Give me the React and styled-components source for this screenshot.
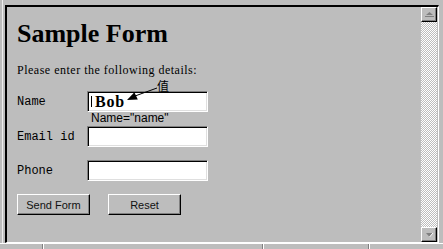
import styled, { createGlobalStyle } from 'styled-components'

const GlobalStyle = createGlobalStyle`
  html, body {
    margin: 0;
    padding: 0;
    background: #bdbdbd;
    overflow: hidden;
  }
`

const Window = styled.div`
  width: 443px;
  height: 249px;
  box-sizing: border-box;
  display: flex;
  flex-direction: column;
  background: #bdbdbd;
`
const Main = styled.div`
  flex: 1;
  display: flex;
  margin-left: 2px;
  border-left: 1px solid #ededed;
  padding: 5px 4px 0 2px;
  min-height: 0;
`
const Panel = styled.div`
  flex: 1;
  display: flex;
  border-style: solid;
  border-width: 2px 1px 1px 2px;
  border-color: #000 #fff #fff #000;
  padding-right: 1px;
  min-width: 0;
`
const Page = styled.div`
  flex: 1;
  padding: 14px 10px 0 10px;
  color: #000;
`
const Title = styled.h1`
  margin: 0;
  font-family: 'Liberation Serif', 'Times New Roman', serif;
  font-weight: bold;
  font-size: 26px;
  line-height: 26px;
`
const Intro = styled.p`
  margin: 16px 0 0;
  font-family: 'Liberation Serif', 'Times New Roman', serif;
  font-size: 12px;
  line-height: 14px;
  letter-spacing: 0.5px;
`
const Form = styled.form`
  margin-top: 14px;
  display: flex;
  flex-direction: column;
`
const Row = styled.div`
  position: relative;
  display: grid;
  grid-template-columns: 70px 121px;
  align-items: center;
  margin-top: ${(p) => p.$mt || 0}px;
`
const Label = styled.label`
  font-family: 'Liberation Mono', 'Courier New', monospace;
  font-size: 12px;
`
const Field = styled.div`
  box-sizing: border-box;
  width: 121px;
  height: 21px;
  background: #fff;
  border: 1px solid;
  border-color: #808080 #fff #fff #808080;
  box-shadow: inset 1px 1px #000, inset -1px -1px #dfdfdf;
  display: flex;
  align-items: center;
  padding-left: 3px;
`
const Caret = styled.span`
  width: 1px;
  height: 11px;
  background: #000;
  margin-right: 3px;
`
const Value = styled.span`
  font-family: 'Liberation Serif', 'Times New Roman', serif;
  font-weight: bold;
  font-size: 16px;
  letter-spacing: 0.8px;
`
const Note = styled.span`
  position: absolute;
  left: 74px;
  top: 20px;
  font-family: 'Liberation Sans', Arial, sans-serif;
  font-size: 12px;
  line-height: 14px;
  white-space: nowrap;
`
const Glyph = styled.span`
  position: absolute;
  left: 140px;
  top: -11px;
  font-family: 'Noto Sans CJK SC', sans-serif;
  font-size: 12px;
  line-height: 12px;
`
const Arrow = styled.svg`
  position: absolute;
  left: 93px;
  top: -6px;
  overflow: visible;
`
const Buttons = styled.div`
  display: flex;
  gap: 18px;
  margin-top: 13px;
`
const Button = styled.button`
  box-sizing: border-box;
  width: 73px;
  height: 21px;
  padding: 0;
  background: #bdbdbd;
  border: 1px solid;
  border-color: #fff #000 #000 #fff;
  box-shadow: inset -1px -1px #808080;
  font-family: 'Liberation Sans', Arial, sans-serif;
  font-size: 11px;
  color: #111;
`
const ScrollBar = styled.div`
  width: 16px;
  display: flex;
  flex-direction: column;
`
const ScrollButton = styled.div`
  box-sizing: border-box;
  height: 15px;
  background: #bdbdbd;
  border: 1px solid;
  border-color: #fff #000 #000 #fff;
  box-shadow: inset -1px -1px #808080;
  display: flex;
  align-items: center;
  justify-content: center;
`
const Track = styled.div`
  flex: 1;
  background: repeating-conic-gradient(#fff 0 25%, #bdbdbd 0 50%) 0 0 / 2px 2px;
`
const StatusBar = styled.div`
  height: 5px;
  display: flex;
  border-top: 1px solid #fff;
  padding-left: 2px;
`
const StatusCell = styled.div`
  width: ${(p) => p.$w}px;
  border-right: 1px solid #808080;
  box-shadow: 1px 0 #fff;
  margin-right: 2px;
`

const UpIcon = () => (
  <svg width="9" height="6" viewBox="0 0 9 6">
    <polygon points="4.5,0 8,3 1,3" fill="#808080" />
    <rect x="0" y="4" width="9" height="1" fill="#808080" />
  </svg>
)

const DownIcon = () => (
  <svg width="9" height="6" viewBox="0 0 9 6">
    <polygon points="1,1 8,1 4.5,5" fill="#808080" />
    <polyline points="8,1 4.5,5" stroke="#fff" strokeWidth="1" fill="none" />
  </svg>
)

export default function App() {
  return (
    <Window>
      <GlobalStyle />
      <Main>
        <Panel>
          <Page>
            <Title>Sample Form</Title>
            <Intro>Please enter the following details:</Intro>
            <Form onSubmit={(e) => e.preventDefault()}>
              <Row>
                <Label>Name</Label>
                <Field>
                  <Caret />
                  <Value>Bob</Value>
                </Field>
                <Glyph>值</Glyph>
                <Arrow width="50" height="20" viewBox="0 0 50 20">
                  <line x1="47" y1="3" x2="25" y2="11" stroke="#000" strokeWidth="1" />
                  <polygon points="17,15 24.4,7.2 27.8,14.4" fill="#000" />
                </Arrow>
                <Note>Name="name"</Note>
              </Row>
              <Row $mt={14}>
                <Label>Email id</Label>
                <Field />
              </Row>
              <Row $mt={13}>
                <Label>Phone</Label>
                <Field />
              </Row>
              <Buttons>
                <Button type="submit">Send Form</Button>
                <Button type="reset">Reset</Button>
              </Buttons>
            </Form>
          </Page>
          <ScrollBar>
            <ScrollButton>
              <UpIcon />
            </ScrollButton>
            <Track />
            <ScrollButton>
              <DownIcon />
            </ScrollButton>
          </ScrollBar>
        </Panel>
      </Main>
      <StatusBar>
        <StatusCell $w={40} />
        <StatusCell $w={217} />
        <StatusCell $w={103} />
      </StatusBar>
    </Window>
  )
}
